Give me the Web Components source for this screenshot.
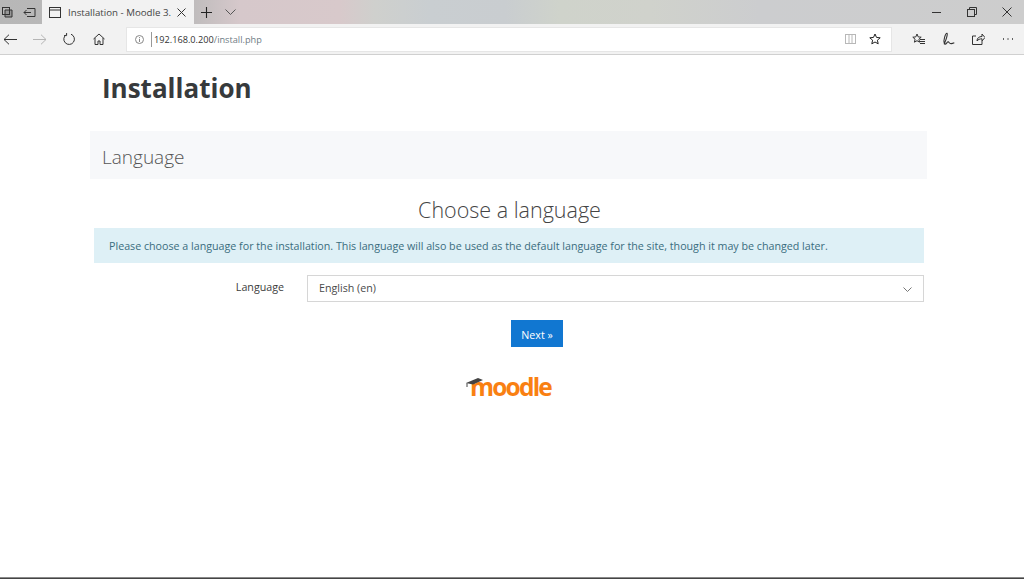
<!DOCTYPE html>
<html lang="en"><head><meta charset="utf-8"><title>Installation - Moodle</title>
<style>
html,body{margin:0;height:579px;overflow:hidden;background:#fff;font-family:"Open Sans","Noto Sans",sans-serif;color:#373a3c}
body{display:flex;flex-direction:column}
install-page{flex:1;min-height:0}
</style></head><body>
<browser-chrome></browser-chrome>
<install-page>
  <page-heading>Installation</page-heading>
  <section-bar>Language</section-bar>
  <h-choose>Choose a language</h-choose>
  <info-alert>Please choose a language for the installation. This language will also be used as the default language for the site, though it may be changed later.</info-alert>
  <select-row label="Language" value="English (en)"></select-row>
  <next-button>Next »</next-button>
  <moodle-logo></moodle-logo>
</install-page>
<task-edge></task-edge>
<script>
const def=(name,html)=>customElements.define(name,class extends HTMLElement{
  constructor(){super();this.attachShadow({mode:'open'}).innerHTML=typeof html==='function'?html(this):html}
});
const ic=(w,h,body,sw=1)=>`<svg width="${w}" height="${h}" viewBox="0 0 ${w} ${h}" fill="none" stroke="currentColor" stroke-width="${sw}" aria-hidden="true">${body}</svg>`;
def('browser-chrome',`<style>
:host{display:block;flex:none;height:55px;font-size:11px;color:#333}
.tabs{height:24px;display:flex;align-items:stretch;background:linear-gradient(90deg,#b7b7b7 0,#bdbbbb 190px,#d6c8cb 240px,#d8c9cb 340px,#cfd0cd 375px,#c9ced1 430px,#c9cdd0 505px,#cfd3cb 560px,#d0d2cc 650px,#cccdcf 760px,#cdcdcd 100%)}
.b{display:flex;align-items:center;justify-content:center;flex:none}
.tab{width:152px;background:#f2f2f2;display:flex;align-items:center;flex:none;box-sizing:border-box;padding-left:7px}
.tab span{margin-left:7px;width:102px;white-space:nowrap;font-size:9.700px;color:#444}
.sp{flex:1}
.tool{height:30px;background:#f2f2f2;border-bottom:1px solid #d0d0d0;display:flex;align-items:center}
.url{width:764px;height:23px;margin-left:9px;background:#fff;display:flex;align-items:center;box-sizing:border-box;flex:none;box-shadow:0 0 0 1px #e6e6e6}
.url .u{font-size:9.200px;color:#333;margin-left:2px;flex:1;white-space:nowrap}
.url .u i{font-style:normal;color:#6f7c85}
.sep{width:1px;height:15px;background:#999}
</style>
<div class="tabs">
<div class="b" style="width:14px;justify-content:flex-start;padding-left:1px">${ic(12,12,'<rect x="1.5" y="1.5" width="7" height="7"/><path d="M4 4h7v7H4z" fill="currentColor" fill-opacity=".25"/>')}</div>
<div class="b" style="width:26px;margin-left:1px">${ic(13,11,'<path d="M4 1.5h8v8H4M8 5.500H1M3.500 3L1 5.500 3.500 8"/>')}</div>
<div class="tab">${ic(12,11,'<rect x=".5" y=".5" width="11" height="10"/><path d="M.5 3h11"/>')}<span>Installation - Moodle 3.</span><div class="b" style="width:22px">${ic(9,9,'<path d="M.5.5l8 8M8.500.5l-8 8"/>')}</div></div>
<div class="b" style="width:24px;color:#222">${ic(11,11,'<path d="M5.500 0v11M0 5.500h11"/>',1.1)}</div>
<div class="b" style="width:24px;color:#555">${ic(11,6,'<path d="M.5.5l5 5 5-5"/>')}</div>
<div class="sp"></div>
<div class="b" style="width:35px">${ic(9,1,'<path d="M0 .5h9"/>')}</div>
<div class="b" style="width:35px">${ic(10,10,'<rect x=".5" y="2.500" width="7" height="7"/><path d="M2.500 2.500v-2h7v7h-2"/>')}</div>
<div class="b" style="width:35px">${ic(10,10,'<path d="M.5.5l9 9M9.500.5l-9 9"/>')}</div>
</div>
<div class="tool">
<div class="b" style="width:20px">${ic(14,11,'<path d="M14 5.500H1M6 .7L1 5.500l5 4.800"/>')}</div>
<div class="b" style="width:39px;color:#b5b5b5">${ic(14,11,'<path d="M0 5.500h13M8 .7l5 4.800-5 4.800"/>')}</div>
<div class="b" style="width:20px">${ic(12,12,'<path d="M3.400 1.600A5.300 5.300 0 1 0 8 1.200"/><path d="M3.600 0v2.600H1"/>')}</div>
<div class="b" style="width:39px">${ic(12,12,'<path d="M.5 6L6 1l5.500 5M2 5v6.500h3v-3.500h2v3.500h3V5"/>')}</div>
<div class="url">
<div class="b" style="width:24px;color:#888">${ic(9,9,'<circle cx="4.500" cy="4.500" r="4"/><path d="M4.500 2v.9M4.500 3.800V7"/>')}</div>
<div class="sep"></div>
<div class="u">192.168.0.200<i>/install.php</i></div>
<div class="b" style="width:24px;color:#b8b8b8">${ic(11,10,'<rect x=".5" y=".5" width="10" height="9"/><path d="M4 .5v9M7 .5v9"/>')}</div>
<div class="b" style="width:25px;margin-right:4px;color:#222">${ic(12,12,'<path d="M6 1l1.500 3.400 3.700.4-2.800 2.400.8 3.600L6 9 2.800 10.800l.8-3.600L.8 4.800l3.700-.4z"/>')}</div>
</div>
<div class="b" style="width:28px;margin-left:13px">${ic(13,12,'<path d="M5 1l1.200 2.900 3 .3-2.300 2 .7 3L5 7.700 2.400 9.200l.7-3-2.300-2 3-.3z"/><path d="M8 6.500h5M8 8.500h5M8 10.500h5"/>')}</div>
<div class="b" style="width:28px;margin-left:2px">${ic(14,14,'<path d="M3.500 12.500C1.500 8 5 1 6 1.300 7 1.700 5 8 3.800 10.500c-.3.700.2 2 1 1.500 1-.6 1.500-2.500 2.500-2.200.8.300 1 2 3 1.800 1 0 2-.4 3-.8"/>',1.1)}</div>
<div class="b" style="width:30px;margin-left:1px">${ic(13,12,'<path d="M4 3H.5v8.500H10V8M5 8C5 5 7 3.500 10 3.500V1l3 3.500L10 8V5.800C8 5.800 6 6.500 5 8z"/>')}</div>
<div class="b" style="width:30px">${ic(12,2,'<path d="M1 1h1M5.500 1h1M10 1h1" stroke-width="1.400"/>')}</div>
</div>`);
def('install-page',`<style>:host{display:block;padding:0 97px 0 90px;box-sizing:border-box}</style><slot></slot>`);
def('page-heading',`<style>:host{display:block;padding:15px 0 0 12px;height:76px;box-sizing:border-box;font-size:26px;line-height:36px;font-weight:700;color:#373a3c}</style><slot></slot>`);
def('section-bar',`<style>:host{display:block;height:48px;background:#f7f8fa;padding-left:12px;font-size:19px;line-height:52px;font-weight:300;color:#555;box-sizing:border-box}</style><slot></slot>`);
def('h-choose',`<style>:host{display:block;text-align:center;height:49px;padding:17px 0 0 2px;box-sizing:border-box;font-size:21.500px;line-height:28px;font-weight:300;color:#444}</style><slot></slot>`);
def('info-alert',`<style>:host{display:block;margin:0 3px 0 4px;height:35px;background:#def0f6;color:#3a6d7e;padding-left:15px;font-size:10.700px;line-height:37px;white-space:nowrap;box-sizing:border-box}</style><slot></slot>`);
def('select-row',el=>`<style>
:host{display:flex;margin:12px 3px 0 4px;height:27px;align-items:center}
.l{width:190px;text-align:right;font-size:10.700px;color:#3c3c3c;padding-bottom:4px}
.s{margin-left:23px;flex:1;height:27px;box-sizing:border-box;border:1px solid #d6d6d6;display:flex;align-items:center;padding:0 11px 2px;font-size:10.700px;color:#4a4a4a;justify-content:space-between}
svg{color:#777;margin-top:3px}
</style><div class="l">${el.getAttribute('label')}</div><div class="s" role="combobox"><span>${el.getAttribute('value')}</span>${ic(9,5,'<path d="M.5.5l4 4 4-4"/>')}</div>`);
def('next-button',`<style>:host{display:flex;margin:18px 0 0 421px}
button{all:unset;width:52px;height:27px;background:#1177d1;color:#fff;text-align:center;font-size:10.700px;line-height:30px;font-family:"Open Sans",sans-serif}</style><button><slot></slot></button>`);
def('moodle-logo',`<style>:host{display:flex;justify-content:center;margin:26px 0 0 0;height:30px}
.w{display:flex;align-items:flex-start;position:relative;padding-left:4px}
span{font:700 24.500px/28px "Open Sans",sans-serif;letter-spacing:-1.800px;color:#f98012;display:block}
svg{position:absolute;left:0;top:4px}
</style><div class="w"><svg width="18" height="12" viewBox="0 0 18 12"><path d="M0 6L12 1l5 2-10 4.500z" fill="#444"/><path d="M1 6v4" stroke="#444" stroke-width="1" fill="none"/></svg><span>moodle</span></div>`);
def('task-edge',`<style>:host{display:block;flex:none;height:2px;background:linear-gradient(#8a8a8a 50%,#444 50%)}</style>`);
</script>
</body></html>
